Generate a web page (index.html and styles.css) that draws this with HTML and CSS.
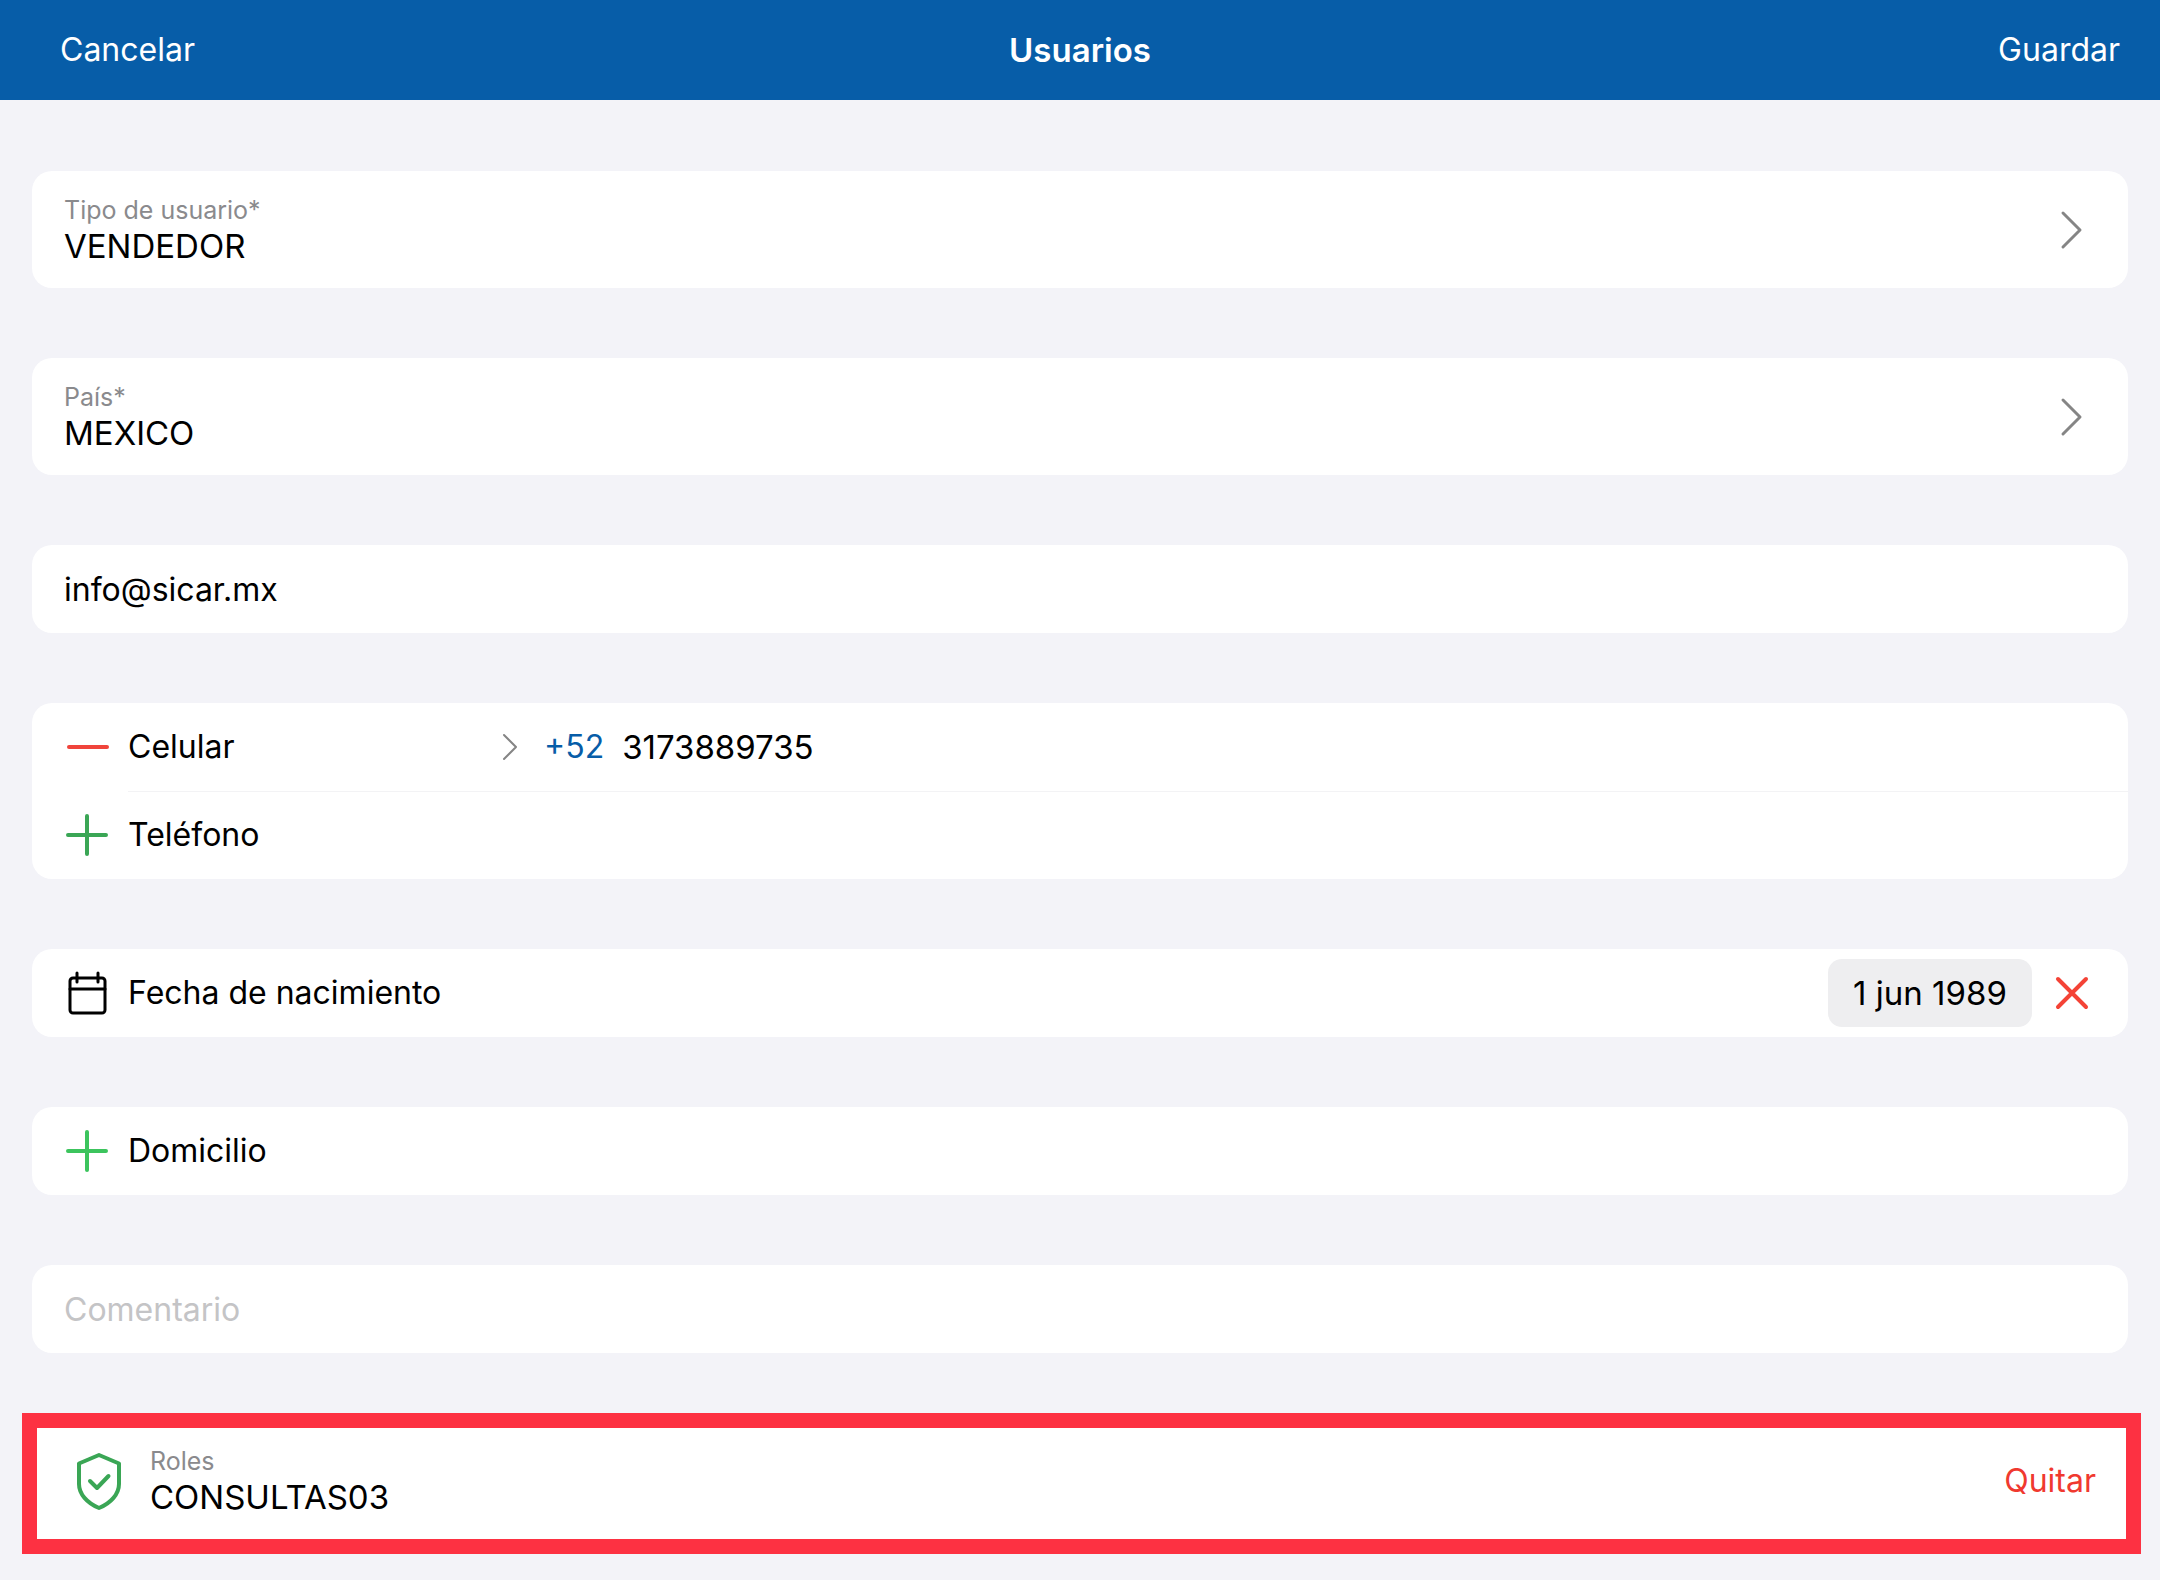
FILE: index.html
```html
<!DOCTYPE html>
<html lang="es">
<head>
<meta charset="utf-8">
<meta name="viewport" content="width=device-width, initial-scale=1">
<title>Usuarios</title>
<link rel="stylesheet" href="styles.css">
</head>
<body>
<header class="navbar">
  <button type="button" class="nav-action nav-cancel">Cancelar</button>
  <h1 class="nav-title">Usuarios</h1>
  <button type="submit" form="user-form" class="nav-action nav-save">Guardar</button>
</header>
<main>
  <form id="user-form" class="form">
    <button type="button" class="card picker">
      <span class="stack">
        <span class="caption">Tipo de usuario*</span>
        <span class="value">VENDEDOR</span>
      </span>
      <svg class="icon chevron" viewBox="0 0 24 40" aria-hidden="true"><path d="M3 3 20 20 3 37"/></svg>
    </button>

    <button type="button" class="card picker">
      <span class="stack">
        <span class="caption">País*</span>
        <span class="value">MEXICO</span>
      </span>
      <svg class="icon chevron" viewBox="0 0 24 40" aria-hidden="true"><path d="M3 3 20 20 3 37"/></svg>
    </button>

    <div class="card row">
      <input class="field" type="email" value="info@sicar.mx" aria-label="Correo electrónico">
    </div>

    <div class="card">
      <div class="row">
        <button type="button" class="icon-button" aria-label="Eliminar teléfono">
          <svg class="icon glyph remove" viewBox="0 0 44 44" aria-hidden="true"><path d="M3 22H41"/></svg>
        </button>
        <button type="button" class="phone-type">
          <span>Celular</span>
          <svg class="icon chevron-small" viewBox="0 0 18 30" aria-hidden="true"><path d="M2 3 14 15 2 27"/></svg>
        </button>
        <button type="button" class="prefix">+52</button>
        <input class="field number" type="tel" value="3173889735" aria-label="Número de teléfono">
      </div>
      <button type="button" class="row divided">
        <svg class="icon glyph add" viewBox="0 0 44 44" aria-hidden="true"><path d="M2 22H40M21 3V41"/></svg>
        <span>Teléfono</span>
      </button>
    </div>

    <div class="card row">
      <svg class="icon glyph calendar" viewBox="0 0 44 44" aria-hidden="true"><rect x="4" y="7" width="35" height="35" rx="3"/><path d="M4 18H39M11 2V11M32 2V11"/></svg>
      <label class="grow" for="birth-date">Fecha de nacimiento</label>
      <input id="birth-date" class="date number" type="text" value="1 jun 1989">
      <button type="button" class="icon-button clear" aria-label="Quitar fecha">
        <svg class="icon cross" viewBox="0 0 36 36" aria-hidden="true"><path d="M4 4 32 32M32 4 4 32"/></svg>
      </button>
    </div>

    <button type="button" class="card row">
      <svg class="icon glyph add-bright" viewBox="0 0 44 44" aria-hidden="true"><path d="M2 22H40M21 3V41"/></svg>
      <span>Domicilio</span>
    </button>

    <div class="card row">
      <input class="field" type="text" placeholder="Comentario" aria-label="Comentario">
    </div>

    <section class="roles" aria-label="Roles">
      <svg class="icon shield" viewBox="0 0 48 60" aria-hidden="true"><path d="M24 4 44 12.500V33C44 43 36 52 24 57 12 52 4 43 4 33V12.500Z"/><path d="M15 30 22 37 33.500 25"/></svg>
      <div class="stack grow">
        <span class="caption">Roles</span>
        <span class="value">CONSULTAS03</span>
      </div>
      <button type="button" class="remove-role">Quitar</button>
    </section>
  </form>
</main>
</body>
</html>
```
FILE: styles.css
```css
* {
  box-sizing: border-box;
}

body {
  margin: 0;
  background: #f3f3f8;
  color: #000;
  font-family: Inter, "Liberation Sans", sans-serif;
  font-size: 32px;
  line-height: 40px;
}

button,
input {
  margin: 0;
  padding: 0;
  border: 0;
  background: none;
  color: inherit;
  font: inherit;
  text-align: left;
}

button {
  cursor: pointer;
}

.navbar {
  display: grid;
  grid-template-columns: 1fr auto 1fr;
  align-items: center;
  height: 100px;
  padding: 0 40px 0 60px;
  background: #075da8;
  color: #fff;
}

.nav-cancel {
  justify-self: start;
}

.nav-save {
  justify-self: end;
}

.nav-title {
  margin: 0 20px 0 0;
  font-size: 33px;
  font-weight: 600;
}

.form {
  display: flex;
  flex-direction: column;
  gap: 70px;
  padding: 71px 32px 26px;
}

.card {
  width: 100%;
  border-radius: 20px;
  background: #fff;
}

.picker {
  display: flex;
  align-items: center;
  justify-content: space-between;
  min-height: 117px;
  padding: 0 44px 0 32px;
}

.row {
  display: flex;
  align-items: center;
  width: 100%;
  min-height: 88px;
  padding: 0 32px;
}

.divided {
  background: linear-gradient(#f3f3f5, #f3f3f5) 96px 0 / 100% 1px no-repeat;
}

.stack {
  display: flex;
  flex-direction: column;
}

.caption {
  color: #8a8a8d;
  font-size: 25px;
  line-height: 32px;
}

.value,
.number {
  font-size: 33px;
}

.grow,
.field {
  flex: 1;
  min-width: 0;
}

.field {
  height: 60px;
}

.field::placeholder {
  color: #c4c4c6;
  opacity: 1;
}

.icon {
  display: block;
  flex: none;
  fill: none;
  stroke: currentColor;
  stroke-width: 4;
  stroke-linecap: round;
  stroke-linejoin: round;
}

.glyph {
  width: 44px;
  height: 44px;
  margin: 0 18px 0 2px;
}

.chevron {
  width: 24px;
  height: 40px;
  color: #858585;
  stroke-width: 3;
}

.chevron-small {
  width: 18px;
  height: 30px;
  color: #858585;
  stroke-width: 2;
}

.remove {
  color: #f0443b;
}

.add {
  color: #3aa655;
}

.add-bright {
  color: #3cc45d;
}

.calendar {
  stroke-width: 3;
}

.phone-type {
  display: flex;
  align-items: center;
  justify-content: space-between;
  width: 392px;
  margin-right: 24px;
}

.prefix {
  margin-right: 18px;
  color: #075da8;
}

.date {
  width: 204px;
  height: 68px;
  border-radius: 14px;
  background: #eeeef0;
  text-align: center;
}

.clear {
  margin: 0 6px 0 22px;
}

.cross {
  width: 36px;
  height: 36px;
  color: #f44336;
}

.roles {
  display: flex;
  align-items: center;
  margin: -10px -13px 0 -10px;
  padding: 17px 30px 22px 38px;
  border: 15px solid #fd3142;
  background: #fff;
}

.shield {
  width: 48px;
  height: 60px;
  margin-right: 27px;
  color: #3aa655;
}

.remove-role {
  color: #f0392f;
}
```
